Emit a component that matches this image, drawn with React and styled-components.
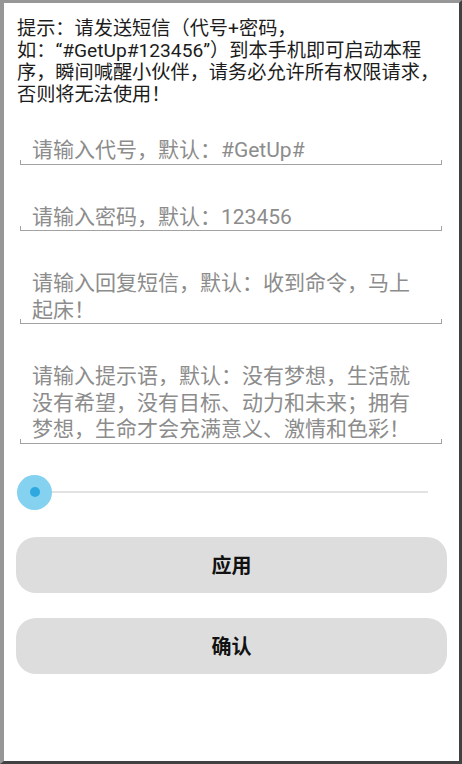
import React from 'react'
import styled, { createGlobalStyle } from 'styled-components'

const GlobalStyle = createGlobalStyle`
  html, body {
    margin: 0;
    padding: 0;
    background: #ffffff;
  }
  body {
    font-family: "Noto Sans CJK SC", sans-serif;
  }
`

const fields = [
  [['请输入代号，默认：', '#GetUp#']],
  [['请输入密码，默认：', '123456']],
  [['请输入回复短信，默认：收到命令，马上'], ['起床！']],
  [['请输入提示语，默认：没有梦想，生活就'], ['没有希望，没有目标、动力和未来；拥有'], ['梦想，生命才会充满意义、激情和色彩！']],
]

const App = () => {
  return (
    <>
      <GlobalStyle />
      <Frame lang="zh-CN">
        <Notice>
          提示：请发送短信（代号<Latin>+</Latin>密码，<br />
          如：<Latin>“#GetUp#123456”</Latin>）到本手机即可启动本程<br />
          序，瞬间喊醒小伙伴，请务必允许所有权限请求，<br />
          否则将无法使用！
        </Notice>

        <Form>
          {fields.map((lines, i) => (
            <Field key={i}>
              {lines.map(([cjk, latin], j) => (
                <React.Fragment key={j}>
                  {j > 0 && <br />}
                  {cjk}
                  {latin && <Latin>{latin}</Latin>}
                </React.Fragment>
              ))}
            </Field>
          ))}
        </Form>

        <SliderRow>
          <Track />
          <Thumb>
            <ThumbDot />
          </Thumb>
        </SliderRow>

        <Actions>
          <Button>应用</Button>
          <Button>确认</Button>
        </Actions>
      </Frame>
    </>
  )
}

const Frame = styled.div`
  box-sizing: border-box;
  width: 462px;
  height: 764px;
  border-left: 4px solid #979797;
  border-top: 3px solid #979797;
  border-right: 3px solid #414141;
  border-bottom: 3px solid #414141;
  background: #ffffff;
  display: flex;
  flex-direction: column;
  overflow: hidden;
`

const Latin = styled.span`
  font-family: Roboto, sans-serif;
  line-height: 1;
`

const Notice = styled.p`
  margin: 0;
  padding: 13px 0 0 13px;
  font-size: 19.2px;
  line-height: 22px;
  color: #1c1c1c;
  white-space: nowrap;
`

const Form = styled.div`
  display: flex;
  flex-direction: column;
  gap: 37px;
  margin: 31px 17px 0 16px;
`

const Field = styled.div`
  position: relative;
  padding: 0 12px 2px 12px;
  font-size: 21px;
  line-height: 26.5px;
  color: #8c8c8c;
  white-space: nowrap;
  border-bottom: 1px solid #a2a2a2;

  &::before,
  &::after {
    content: '';
    position: absolute;
    bottom: -1px;
    width: 1px;
    height: 5px;
    background: #a2a2a2;
  }
  &::before {
    left: 0;
  }
  &::after {
    right: 0;
  }
`

const SliderRow = styled.div`
  position: relative;
  display: flex;
  align-items: center;
  height: 35px;
  margin: 31px 31px 0 13px;
`

const Track = styled.div`
  flex: 1;
  height: 2px;
  margin-left: 18px;
  background: #e2e2e2;
`

const Thumb = styled.div`
  position: absolute;
  left: 0;
  top: 0;
  width: 35px;
  height: 35px;
  border-radius: 50%;
  background: #84d1f0;
  display: flex;
  align-items: center;
  justify-content: center;
`

const ThumbDot = styled.div`
  width: 10px;
  height: 10px;
  border-radius: 50%;
  background: #2ea9e0;
`

const Actions = styled.div`
  display: flex;
  flex-direction: column;
  gap: 25px;
  margin: 27px 12px 0 12px;
`

const Button = styled.button`
  height: 56px;
  border: none;
  border-radius: 20px;
  background: #dddddd;
  font-family: "Noto Sans CJK SC", sans-serif;
  font-size: 20px;
  font-weight: 700;
  color: #111111;
  padding: 0;
  cursor: pointer;
`

export default App
